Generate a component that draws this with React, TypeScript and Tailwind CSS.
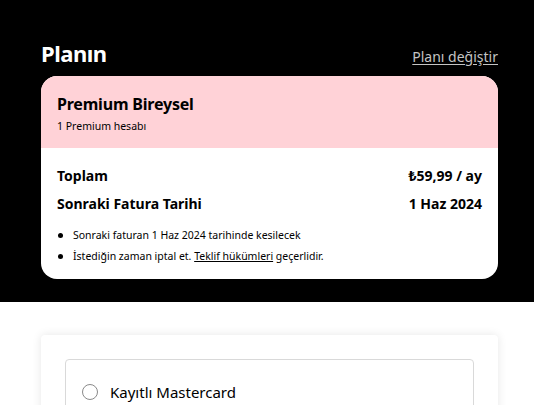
import React from "react";

const font = { fontFamily: '"Noto Sans", "Liberation Sans", sans-serif' };

export default function App() {
  return (
    <div className="w-[534px] h-[405px] overflow-hidden bg-white" style={font}>
      {/* Plan section */}
      <section className="bg-black pl-[41px] pr-[36px] pt-[38px] h-[302px]">
        <div className="flex items-end justify-between h-[30px]">
          <h2 className="text-[22px] leading-[30px] font-bold text-white tracking-[-0.5px]">Planın</h2>
          <a href="#" className="text-[14px] leading-[20px] text-[#c4c4c4] underline underline-offset-2 mb-[1px]">
            Planı değiştir
          </a>
        </div>

        <div className="mt-[8px] rounded-[16px] overflow-hidden bg-white">
          <div className="bg-[#ffd2d7] h-[72px] px-[16px] pt-[18px]">
            <h3 className="text-[16px] leading-[20px] font-bold text-black tracking-[-0.2px]">Premium Bireysel</h3>
            <p className="mt-[5px] text-[10.5px] leading-[14px] text-black">1 Premium hesabı</p>
          </div>
          <div className="px-[16px] pt-[18px] pb-[15px]">
            <div className="flex justify-between text-[14px] leading-[20px] font-bold text-black">
              <span>Toplam</span>
              <span>₺59,99 / ay</span>
            </div>
            <div className="mt-[8px] flex justify-between text-[14px] leading-[20px] font-bold text-black">
              <span>Sonraki Fatura Tarihi</span>
              <span>1 Haz 2024</span>
            </div>
            <ul className="mt-[14px] flex flex-col gap-[6px] text-[10.5px] leading-[15px] text-black">
              <li className="flex items-center gap-[10px]">
                <span className="w-[5px] h-[5px] rounded-full bg-black ml-[1px]" />
                <span>Sonraki faturan 1 Haz 2024 tarihinde kesilecek</span>
              </li>
              <li className="flex items-center gap-[10px]">
                <span className="w-[5px] h-[5px] rounded-full bg-black ml-[1px]" />
                <span>
                  İstediğin zaman iptal et. <span className="underline">Teklif hükümleri</span> geçerlidir.
                </span>
              </li>
            </ul>
          </div>
        </div>
      </section>

      {/* Payment section */}
      <section className="px-[41px] pt-[33px]">
        <div className="w-[457px] h-[120px] rounded-[4px] bg-white shadow-[0_0_10px_rgba(0,0,0,0.1)] px-[24px] pt-[24px]">
          <div className="h-[100px] rounded-[4px] border border-[#d9d9d9] px-[16px] pt-[22px]">
            <label className="flex items-center gap-[12px]">
              <span className="w-[16px] h-[16px] rounded-full border border-[#8a8a8a] bg-white" />
              <span className="text-[15px] leading-[20px] text-black">Kayıtlı Mastercard</span>
            </label>
          </div>
        </div>
      </section>
    </div>
  );
}
